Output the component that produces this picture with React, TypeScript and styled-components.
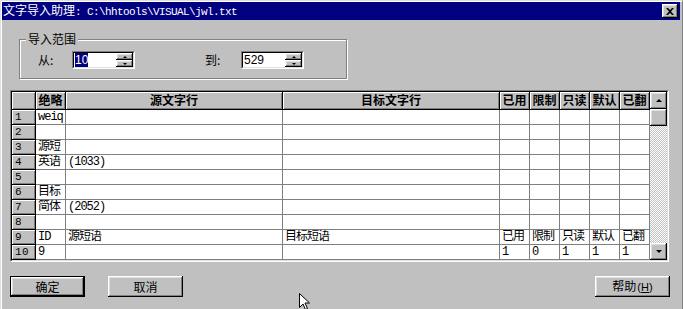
import React from "react";
import styled, { createGlobalStyle } from "styled-components";

const GlobalStyle = createGlobalStyle`
  html, body {
    margin: 0;
    padding: 0;
    background: #c0c0c0;
  }
  body {
    font-family: "Noto Sans CJK SC", "Liberation Sans", sans-serif;
    font-size: 12px;
    color: #000;
  }
  * {
    box-sizing: border-box;
  }
`;

const raised = `
  box-shadow: inset -1px -1px 0 #000, inset 1px 1px 0 #fff,
    inset -2px -2px 0 #808080, inset 2px 2px 0 #dfdfdf;
`;

const Window = styled.div`
  position: relative;
  width: 683px;
  height: 309px;
  overflow: hidden;
  background: #c0c0c0;
  border-top: 1px solid #dfdfdf;
  border-left: 1px solid #dfdfdf;
  border-right: 1px solid #808080;
  padding: 1px 2px 0 1px;
  box-shadow: inset 1px 1px 0 #fff;
`;

const TitleBar = styled.div`
  height: 18px;
  background: #000080;
  color: #fff;
  display: flex;
  align-items: center;
  justify-content: space-between;
  padding: 0 2px 0 1px;
  white-space: nowrap;
`;

const Caption = styled.span`
  font-size: 12px;
  line-height: 18px;
`;

const Mono = styled.span`
  font-family: "Liberation Mono", monospace;
  font-size: 11px;
  letter-spacing: -0.6px;
`;

const CloseBox = styled.div`
  width: 16px;
  height: 14px;
  background: #c0c0c0;
  display: flex;
  align-items: center;
  justify-content: center;
  ${raised}
`;

const GroupBox = styled.div`
  position: relative;
  margin: 19px 0 0 17px;
  width: 328px;
  height: 40px;
  border: 1px solid #808080;
  box-shadow: inset 1px 1px 0 #fff, 1px 1px 0 #fff;
  display: flex;
  align-items: flex-start;
  padding: 11px 0 0 18px;
`;

const GroupLabel = styled.span`
  position: absolute;
  top: -8px;
  left: 6px;
  padding: 0 2px;
  background: #c0c0c0;
  line-height: 14px;
`;

const FieldLabel = styled.span<{ $w: number; $gap?: number }>`
  width: ${(p) => p.$w}px;
  margin-left: ${(p) => p.$gap ?? 0}px;
  line-height: 18px;
`;

const SpinBox = styled.div`
  width: 63px;
  height: 18px;
  display: flex;
  background: #fff;
  border: 1px solid;
  border-color: #808080 #fff #fff #808080;
`;

const SpinInner = styled.div`
  flex: 1;
  display: flex;
  border: 1px solid;
  border-color: #000 #dfdfdf #dfdfdf #000;
`;

const SpinText = styled.div`
  flex: 1;
  padding: 1px 0 0 1px;
  font-family: "Liberation Sans", sans-serif;
  font-size: 12px;
  line-height: 13px;
`;

const Selected = styled.span`
  background: #000080;
  color: #fff;
`;

const SpinButtons = styled.div`
  width: 17px;
  display: flex;
  flex-direction: column;
`;

const SpinButton = styled.div`
  flex: 1;
  background: #c0c0c0;
  display: flex;
  align-items: center;
  justify-content: center;
  ${raised}
`;

const Arrow = styled.span<{ $dir: "up" | "down"; $size: number }>`
  width: 0;
  height: 0;
  border-left: ${(p) => p.$size}px solid transparent;
  border-right: ${(p) => p.$size}px solid transparent;
  ${(p) =>
    p.$dir === "up"
      ? `border-bottom: ${p.$size}px solid #000;`
      : `border-top: ${p.$size}px solid #000;`}
`;

const GridFrame = styled.div`
  margin: 11px 0 0 8px;
  width: 659px;
  height: 172px;
  border: 1px solid;
  border-color: #808080 #fff #fff #808080;
`;

const GridInner = styled.div`
  height: 100%;
  display: flex;
  border: 1px solid;
  border-color: #000 #dfdfdf #dfdfdf #000;
`;

const Table = styled.div`
  display: grid;
  grid-template-columns: 24px 30px 217px 217px repeat(5, 30px);
  grid-template-rows: 18px repeat(10, 15px);
  background: #fff;
`;

const HeadCell = styled.div<{ $left?: boolean }>`
  background: #c0c0c0;
  border-right: 1px solid #000;
  border-bottom: 1px solid #000;
  box-shadow: inset 1px 1px 0 #fff, inset -1px -1px 0 #808080;
  font-weight: bold;
  font-size: 12px;
  line-height: 16px;
  text-align: ${(p) => (p.$left ? "left" : "center")};
  white-space: nowrap;
  overflow: hidden;
`;

const RowHead = styled.div`
  background: #c0c0c0;
  border-right: 1px solid #000;
  border-bottom: 1px solid #000;
  box-shadow: inset 1px 1px 0 #fff, inset -1px -1px 0 #808080;
  padding-left: 3px;
  font-family: "Liberation Mono", monospace;
  font-size: 11px;
  letter-spacing: 0.4px;
  line-height: 14px;
`;

const Cell = styled.div`
  background: #fff;
  border-right: 1px solid #808080;
  border-bottom: 1px solid #808080;
  padding-left: 2px;
  font-family: "Liberation Mono", "Noto Sans CJK SC", monospace;
  font-size: 12px;
  letter-spacing: -1px;
  line-height: 14px;
  white-space: nowrap;
  overflow: hidden;
`;

const ScrollBar = styled.div`
  width: 17px;
  display: flex;
  flex-direction: column;
`;

const ScrollButton = styled.div`
  height: 17px;
  flex: none;
  background: #c0c0c0;
  display: flex;
  align-items: center;
  justify-content: center;
  ${raised}
`;

const Track = styled.div`
  flex: 1;
  background: repeating-conic-gradient(#c0c0c0 0 25%, #fff 0 50%) 0 0 / 2px
    2px;
`;

const ButtonRow = styled.div`
  display: flex;
  margin-top: 14px;
  padding: 0 10px 0 8px;
`;

const PushButton = styled.button<{ $default?: boolean; $push?: boolean }>`
  width: 75px;
  height: 21px;
  margin-left: ${(p) => (p.$push ? "auto" : "0")};
  margin-right: 23px;
  padding: 0;
  background: #c0c0c0;
  border: ${(p) => (p.$default ? "1px solid #000" : "none")};
  ${raised}
  font-family: "Noto Sans CJK SC", sans-serif;
  font-size: 12px;
  line-height: 19px;
  color: #000;

  &:last-child {
    margin-right: 0;
  }
`;

const HotKey = styled.span`
  font-family: "Liberation Sans", sans-serif;
  font-size: 11px;
  margin-left: 1px;
`;

const Pointer = styled.svg`
  position: absolute;
  left: 297px;
  top: 291px;
`;

const headers = ["绝略", "源文字行", "目标文字行", "已用", "限制", "只读", "默认", "已翻"];

const rows: string[][] = [
  ["weiq"],
  [],
  ["源短"],
  ["英语", "(1033)"],
  [],
  ["目标"],
  ["简体", "(2052)"],
  [],
  ["ID", "源短语", "目标短语", "已用", "限制", "只读", "默认", "已翻"],
  ["9", "", "", "1", "0", "1", "1", "1"],
];

const Spin = ({ value, selected }: { value: string; selected?: boolean }) => (
  <SpinBox>
    <SpinInner>
      <SpinText>{selected ? <Selected>{value}</Selected> : value}</SpinText>
      <SpinButtons>
        <SpinButton>
          <Arrow $dir="up" $size={2} />
        </SpinButton>
        <SpinButton>
          <Arrow $dir="down" $size={2} />
        </SpinButton>
      </SpinButtons>
    </SpinInner>
  </SpinBox>
);

export default function App() {
  return (
    <>
      <GlobalStyle />
      <Window>
        <TitleBar>
          <Caption>
            文字导入助理<Mono>: C:\hhtools\VISUAL\jwl.txt</Mono>
          </Caption>
          <CloseBox>
            <svg width="8" height="7" viewBox="0 0 8 7">
              <path d="M0 0h2l2 2 2-2h2L5 3.5 8 7H6L4 5 2 7H0l3-3.5z" fill="#000" />
            </svg>
          </CloseBox>
        </TitleBar>

        <GroupBox>
          <GroupLabel>导入范围</GroupLabel>
          <FieldLabel $w={34}>从:</FieldLabel>
          <Spin value="10" selected />
          <FieldLabel $w={36} $gap={70}>
            到:
          </FieldLabel>
          <Spin value="529" />
        </GroupBox>

        <GridFrame>
          <GridInner>
            <Table>
              <HeadCell />
              {headers.map((h) => (
                <HeadCell key={h}>{h}</HeadCell>
              ))}
              {rows.map((row, r) => (
                <React.Fragment key={r}>
                  <RowHead>{r + 1}</RowHead>
                  {headers.map((_, c) => (
                    <Cell key={c}>{row[c] ?? ""}</Cell>
                  ))}
                </React.Fragment>
              ))}
            </Table>
            <ScrollBar>
              <ScrollButton>
                <Arrow $dir="up" $size={3} />
              </ScrollButton>
              <ScrollButton />
              <Track />
              <ScrollButton>
                <Arrow $dir="down" $size={3} />
              </ScrollButton>
            </ScrollBar>
          </GridInner>
        </GridFrame>

        <ButtonRow>
          <PushButton $default>确定</PushButton>
          <PushButton>取消</PushButton>
          <PushButton $push>
            帮助<HotKey>(<u>H</u>)</HotKey>
          </PushButton>
        </ButtonRow>

        <Pointer width="12" height="19" viewBox="0 0 12 19">
          <path
            d="M1.5 1.5v14l3.5-3.5 2.5 5.5 2-1-2.5-5.5h4.5z"
            fill="#fff"
            stroke="#000"
            strokeWidth="1"
          />
        </Pointer>
      </Window>
    </>
  );
}
